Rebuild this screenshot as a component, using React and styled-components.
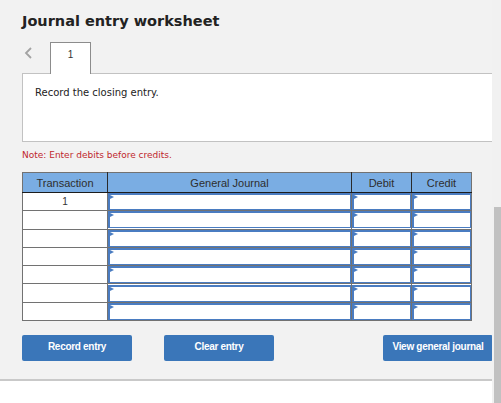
import React from "react";
import styled, { createGlobalStyle } from "styled-components";

const blue = "#4a7cc1";
const grid = "#727272";

const GlobalStyle = createGlobalStyle`
  html, body {
    margin: 0;
    padding: 0;
    background: #ffffff;
    overflow: hidden;
  }
`;

const Page = styled.div`
  width: 492px;
  background: #f2f2f2;
  padding: 12px 0 0 22px;
  box-sizing: border-box;
  border-bottom: 2px solid #c9c9c9;
  height: 381px;
`;

const Title = styled.h1`
  margin: 0;
  font-family: "DejaVu Sans", Verdana, sans-serif;
  font-size: 14.5px;
  line-height: 18px;
  font-weight: bold;
  color: #222;
`;

const TabRow = styled.div`
  display: flex;
  align-items: flex-end;
  margin-top: 12px;
  height: 32px;
  position: relative;
  z-index: 1;
`;

const Arrow = styled.svg`
  width: 28px;
  height: 12px;
  align-self: flex-start;
  margin-top: 5px;
`;

const Tab = styled.div`
  width: 41px;
  height: 32px;
  background: #fff;
  border: 1px solid #8c8c8c;
  border-bottom: none;
  display: flex;
  justify-content: center;
  padding-top: 6px;
  box-sizing: border-box;
  font-family: "Liberation Sans", Arial, sans-serif;
  font-size: 10px;
  color: #333;
`;

const Prompt = styled.div`
  height: 69px;
  box-sizing: border-box;
  background: #fff;
  border: 1px solid #c2c2c2;
  border-right: none;
  margin-top: -1px;
  padding: 13px 12px;
  font-family: "DejaVu Sans", Verdana, sans-serif;
  font-size: 10px;
  line-height: 12px;
  color: #222;
`;

const Note = styled.p`
  margin: 7px 0 0;
  font-family: "DejaVu Sans", Verdana, sans-serif;
  font-size: 9px;
  line-height: 12px;
  color: #c0272d;
`;

const Table = styled.table`
  margin-top: 11px;
  width: 449px;
  border-collapse: collapse;
  table-layout: fixed;
  border: 1px solid ${grid};
  font-family: "Liberation Sans", Arial, sans-serif;
`;

const Head = styled.th`
  height: 19px;
  padding: 0;
  background: #7aade3;
  border-bottom: 1px solid #1c1c1c;
  border-left: 1px solid #2a2a2a;
  font-size: 11px;
  font-weight: normal;
  color: #2e2e2e;
  &:first-child {
    border-left: none;
  }
`;

const Cell = styled.td`
  height: 17.3px;
  padding: 0;
  background: #fff;
  border: 1px solid ${grid};
  text-align: center;
  font-size: 10px;
  color: #333;
`;

const Input = styled.div`
  position: relative;
  height: 17px;
  box-sizing: border-box;
  border: 1px solid ${blue};
  border-left-width: 2px;
  border-top-width: 2px;
  background: #fff;

  &::before {
    content: "";
    position: absolute;
    left: 0;
    top: 0;
    border-left: 4px solid ${blue};
    border-top: 2px solid transparent;
    border-bottom: 2px solid transparent;
  }
`;

const Buttons = styled.div`
  display: flex;
  gap: 32px;
  margin-top: 14px;
  margin-right: -1px;
`;

const Button = styled.button`
  width: 110px;
  height: 26px;
  border: none;
  border-radius: 2px;
  background: #3a76b9;
  color: #fff;
  font-family: "Liberation Sans", Arial, sans-serif;
  font-size: 10px;
  font-weight: bold;
  letter-spacing: -0.3px;
  padding: 0 0 3px;
  margin-left: ${(p) => (p.$push ? "auto" : "0")};
`;

const Track = styled.div`
  position: fixed;
  top: 0;
  right: 0;
  bottom: 0;
  width: 9px;
  background: #f1f1f1;
`;

const Thumb = styled.div`
  position: absolute;
  top: 207px;
  left: 2px;
  right: 0;
  bottom: 0;
  background: #c1c1c1;
`;

const rows = [1, 2, 3, 4, 5, 6, 7];

export default function App() {
  return (
    <>
      <GlobalStyle />
      <Page>
        <Title>Journal entry worksheet</Title>
        <TabRow>
          <Arrow viewBox="0 0 28 12">
            <polyline points="9,1 4,6 9,11" fill="none" stroke="#a3a3a3" strokeWidth="1.8" />
          </Arrow>
          <Tab>1</Tab>
        </TabRow>
        <Prompt>Record the closing entry.</Prompt>
        <Note>Note: Enter debits before credits.</Note>
        <Table>
          <colgroup>
            <col style={{ width: 85 }} />
            <col style={{ width: 244 }} />
            <col style={{ width: 60 }} />
            <col style={{ width: 60 }} />
          </colgroup>
          <thead>
            <tr>
              <Head>Transaction</Head>
              <Head>General Journal</Head>
              <Head>Debit</Head>
              <Head>Credit</Head>
            </tr>
          </thead>
          <tbody>
            {rows.map((r) => (
              <tr key={r}>
                <Cell>{r === 1 ? "1" : ""}</Cell>
                <Cell><Input /></Cell>
                <Cell><Input /></Cell>
                <Cell><Input /></Cell>
              </tr>
            ))}
          </tbody>
        </Table>
        <Buttons>
          <Button>Record entry</Button>
          <Button>Clear entry</Button>
          <Button $push>View general journal</Button>
        </Buttons>
      </Page>
      <Track>
        <Thumb />
      </Track>
    </>
  );
}
